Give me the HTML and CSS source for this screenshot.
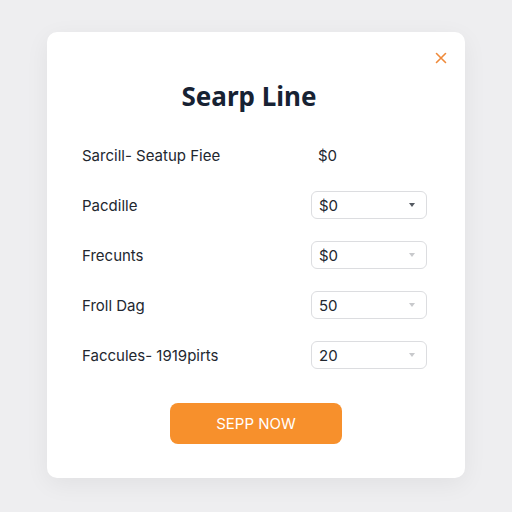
FILE: index.html
```html
<!DOCTYPE html>
<html lang="en">
<head>
	<meta charset="UTF-8">
	<title>Searp Line</title>
	<link rel="stylesheet" href="styles.css">
</head>
<body>
	<div class="modal">
		<button class="close" aria-label="Close">
			<svg width="12" height="12" viewBox="0 0 12 12"><path d="M1.5 1.5L10.5 10.5M10.5 1.5L1.5 10.5" stroke="#ef8a3a" stroke-width="1.6" stroke-linecap="round"/></svg>
		</button>
		<h1 class="title">Searp Line</h1>
		<ul class="rows">
			<li class="row">
				<span class="label">Sarcill- Seatup Fiee</span>
				<span class="value">$0</span>
			</li>
			<li class="row">
				<span class="label">Pacdille</span>
				<div class="select">
					<span>$0</span>
					<svg class="caret dark" width="6" height="4" viewBox="0 0 6 4"><path d="M0 0H6L3 4Z"/></svg>
				</div>
			</li>
			<li class="row">
				<span class="label">Frecunts</span>
				<div class="select">
					<span>$0</span>
					<svg class="caret" width="6" height="4" viewBox="0 0 6 4"><path d="M0 0H6L3 4Z"/></svg>
				</div>
			</li>
			<li class="row">
				<span class="label">Froll Dag</span>
				<div class="select">
					<span>50</span>
					<svg class="caret" width="6" height="4" viewBox="0 0 6 4"><path d="M0 0H6L3 4Z"/></svg>
				</div>
			</li>
			<li class="row">
				<span class="label">Faccules- 1919pirts</span>
				<div class="select">
					<span>20</span>
					<svg class="caret" width="6" height="4" viewBox="0 0 6 4"><path d="M0 0H6L3 4Z"/></svg>
				</div>
			</li>
		</ul>
		<div class="actions">
			<button class="btn">SEPP NOW</button>
		</div>
	</div>
</body>
</html>
```

FILE: styles.css
```css
*{
	margin:0;
	padding:0;
	box-sizing:border-box;
}
html,body{
	width:100%;
	height:100%;
	overflow:hidden;
}
body{
	background:#eeeef0;
	padding-top:32px;
	font-family:Inter,"Noto Sans",sans-serif;
	color:#22272f;
}
.modal{
	position:relative;
	width:418px;
	height:446px;
	margin:0 auto;
	background:#fff;
	border-radius:10px;
	box-shadow:0 6px 24px rgba(0,0,0,0.06);
	padding:48px 38px 0 35px;
}
.close{
	position:absolute;
	top:19px;
	right:17px;
	width:14px;
	height:14px;
	border:none;
	background:none;
	display:flex;
	align-items:center;
	justify-content:center;
}
.title{
	text-align:center;
	font-family:"Noto Sans",sans-serif;
	font-size:26px;
	font-weight:700;
	line-height:32px;
	color:#172233;
	margin-bottom:18px;
	padding-right:11px;
}
.rows{
	list-style:none;
}
.row{
	height:50px;
	display:flex;
	align-items:center;
	justify-content:space-between;
}
.label{
	font-size:15px;
	color:#22272f;
}
.value,.select{
	width:116px;
	font-size:15px;
	color:#22272f;
	padding-left:7px;
}
.select{
	height:28px;
	border:1px solid #dcdde0;
	border-radius:6px;
	display:flex;
	align-items:center;
	justify-content:space-between;
	padding-right:11px;
}
.caret{
	fill:#c8c9cc;
}
.caret.dark{
	fill:#555a62;
}
.actions{
	display:flex;
	justify-content:center;
	margin-top:23px;
	padding-left:3px;
}
.btn{
	width:172px;
	height:41px;
	border:none;
	border-radius:8px;
	background:#f7902c;
	color:#fff;
	font-family:Inter,sans-serif;
	font-size:15px;
	font-weight:400;
}
```
